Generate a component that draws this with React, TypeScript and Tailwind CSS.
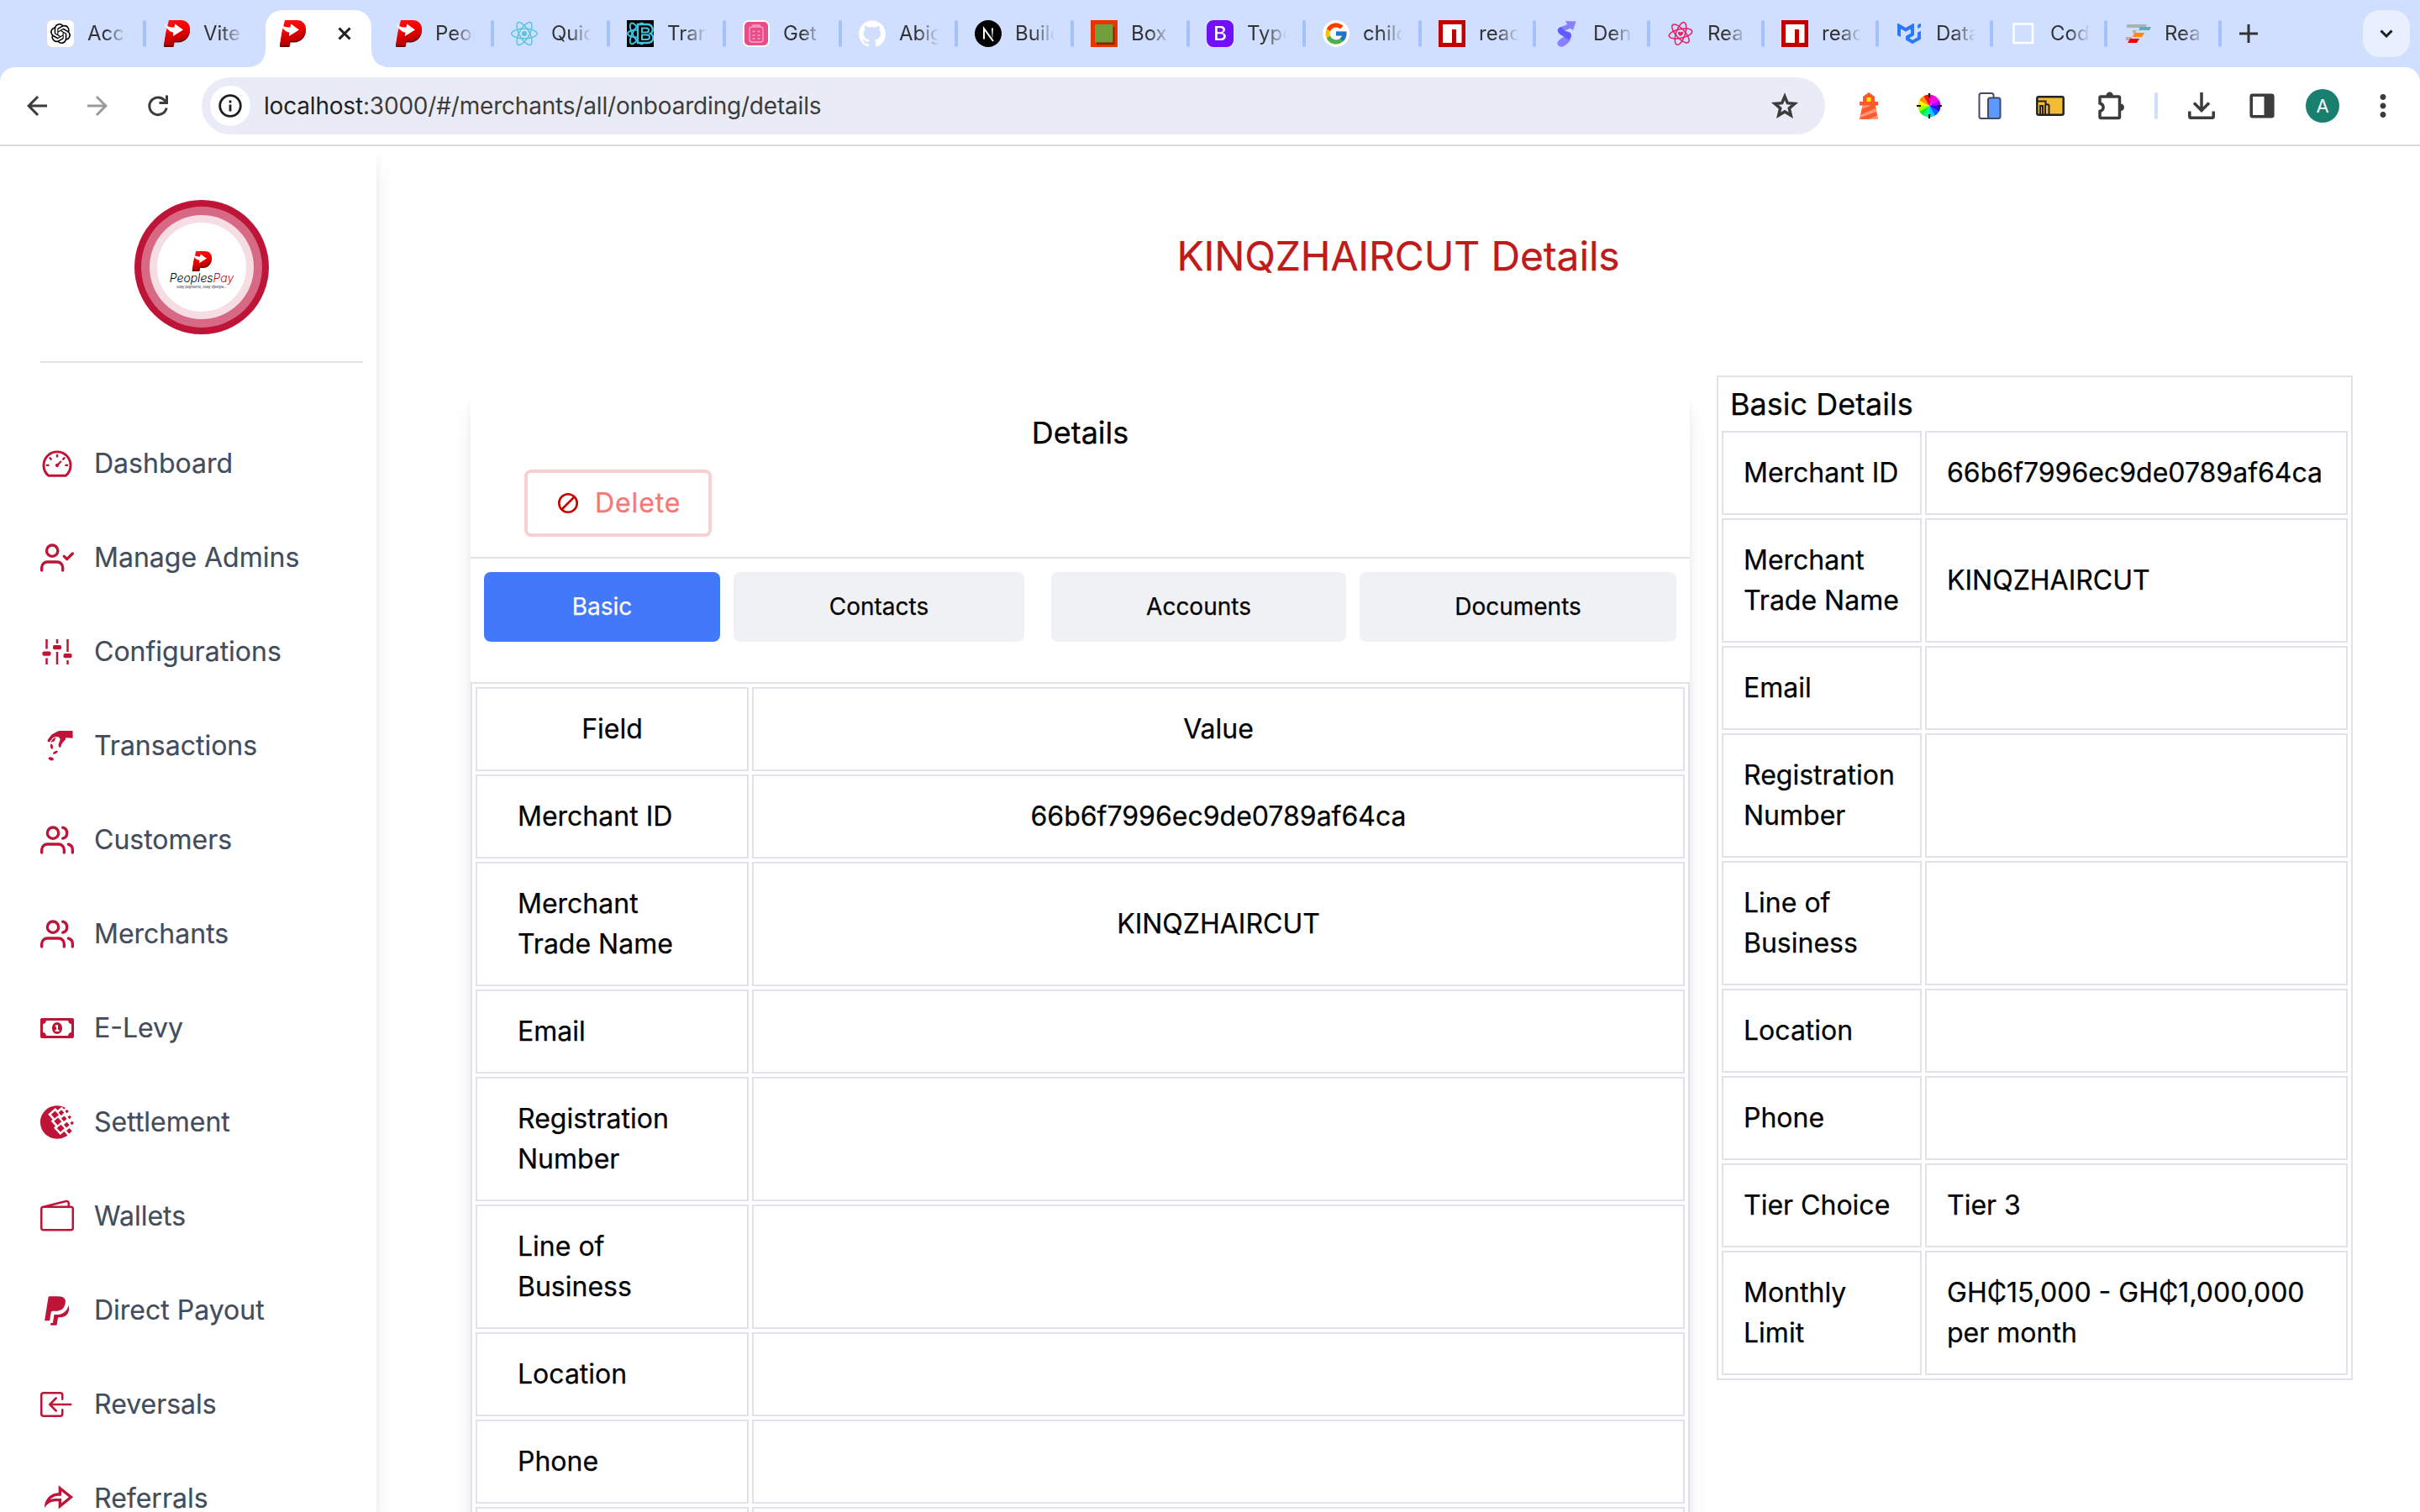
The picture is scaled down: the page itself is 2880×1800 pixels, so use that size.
import type { ReactNode } from "react";
import { FiUserCheck, FiUsers } from "react-icons/fi";
import { AiOutlineDashboard } from "react-icons/ai";
import { GiPayMoney } from "react-icons/gi";
import { FaRegMoneyBillAlt } from "react-icons/fa";
import { SiWebmoney, SiOpenai, SiReact, SiGithub, SiMui } from "react-icons/si";
import { BsWallet2, BsBoxArrowInLeft, BsBootstrapFill } from "react-icons/bs";
import { RiPaypalFill, RiShareForwardLine } from "react-icons/ri";
import { FcGoogle } from "react-icons/fc";
import { MdArrowBack, MdArrowForward, MdMoreVert } from "react-icons/md";

/* ---------- Logos and favicons ---------- */

function PayMark({ className }: { className?: string }) {
  return (
    <svg viewBox="0 0 32 32" className={className}>
      <defs>
        <linearGradient id="payRed" x1="0" y1="0" x2="0.3" y2="1">
          <stop offset="0" stopColor="#ff1414" />
          <stop offset="0.5" stopColor="#f30000" />
          <stop offset="1" stopColor="#a80000" />
        </linearGradient>
      </defs>
      <path d="M8 2h13c7 0 11 4.500 11 10.500C32 20 26 26.500 18.500 26.500H13.500L12.500 32H1L3.500 16z" fill="#5c0808" />
      <path d="M7 0h14c7 0 11 4.500 11 10.500C32 18.500 26 25 18.500 25H13.500L12.500 30.500H0.800L3.500 14z" fill="url(#payRed)" />
      <path d="M1.500 4c3 3.500 7 5 12 4.500l.8-4L24 11.500l-12 7.500.3-4.500C7.500 14 4 10 1.500 4z" fill="#fff" />
    </svg>
  );
}

function OpenAiFav() {
  return (
    <div className="flex size-8 items-center justify-center rounded-md bg-white">
      <SiOpenai className="size-6 text-black" />
    </div>
  );
}

function BootstrapReactFav() {
  return (
    <svg viewBox="0 0 32 32" className="size-8">
      <rect width="32" height="32" fill="#000" />
      <g fill="none" stroke="#41c4e0" strokeWidth="2">
        <ellipse cx="12" cy="16" rx="11" ry="4.500" />
        <ellipse cx="12" cy="16" rx="14" ry="5" transform="rotate(60 12 16)" />
        <ellipse cx="12" cy="16" rx="14" ry="5" transform="rotate(-60 12 16)" />
      </g>
      <path d="M13 5h11c8 0 8 9 4 11 5 2 5 11-4 11H13z" fill="#000" stroke="#41c4e0" strokeWidth="2.400" />
      <path d="M18 9.500h5c4 0 4 5 0 5h-5zM18 17.500h6c4 0 4 5.500 0 5.500h-6z" fill="none" stroke="#41c4e0" strokeWidth="2" />
    </svg>
  );
}

function ClipboardFav() {
  return (
    <svg viewBox="0 0 32 32" className="size-8">
      <rect width="32" height="32" rx="7" fill="#fff" />
      <rect x="2" y="2" width="28" height="28" rx="5" fill="#ea4c89" />
      <g fill="none" stroke="#f7a6c5" strokeWidth="1.400">
        <rect x="8" y="8" width="16" height="18" rx="3" />
        <path d="M12 8V6h8v2M11.500 13.500h3M17.500 13.500h3M11.500 18h3M17.500 18h3M11.500 22h3M17.500 22h3" />
      </g>
    </svg>
  );
}

function NextFav() {
  return (
    <svg viewBox="0 0 32 32" className="size-8">
      <defs>
        <linearGradient id="nextStroke" x1="0" y1="0" x2="0" y2="1">
          <stop offset="0" stopColor="#fff" />
          <stop offset="1" stopColor="#fff" stopOpacity="0.200" />
        </linearGradient>
      </defs>
      <circle cx="16" cy="16" r="16" fill="#000" />
      <path d="M11 22.500V10l11 15" fill="none" stroke="#fff" strokeWidth="2" />
      <rect x="20" y="9.500" width="2" height="12" fill="url(#nextStroke)" />
    </svg>
  );
}

function BoxFav() {
  return (
    <svg viewBox="0 0 32 32" className="size-8">
      <rect width="32" height="32" fill="#e53500" />
      <rect x="7" y="8" width="21.500" height="21" fill="#8a2000" />
      <rect x="5" y="5" width="21.500" height="21.500" fill="#6f9f3a" />
    </svg>
  );
}

function BootstrapFav() {
  return (
    <div className="size-8 rounded-md bg-white">
      <BsBootstrapFill className="size-8 text-[#7010f8]" />
    </div>
  );
}

function GoogleFav() {
  return (
    <div className="flex size-8 items-center justify-center rounded-full bg-white">
      <FcGoogle className="size-[30px]" />
    </div>
  );
}

function NpmFav() {
  return (
    <svg viewBox="0 0 32 32" className="size-8">
      <rect width="32" height="32" fill="#c00000" />
      <path d="M5 5h22.500v22H21V11h-5v16H5z" fill="#fff" />
    </svg>
  );
}

function RibbonFav() {
  return (
    <svg viewBox="0 0 32 32" className="size-8">
      <path d="M15 1l12.500.5L24 12l-3.500-2.500C17 12 13 12 12 16 8 17 5 13 6 11c1-3 7-3.500 11-6z" fill="#8880ff" />
      <path d="M6 10.500C5 15.500 9 17.500 12.500 19l4 6.500c5.500-2.500 7.500-8.500 3.500-11-2.500-1.500-7-1-8-4.500L9 8z" fill="#635bff" />
      <path d="M13 19.500c-2 2-8 5-7.500 8.500.6 3.500 4.500 4.500 7.500 3 4-2.500 7.500-5.500 8-9-2 2-5 1-8-2.500z" fill="#8880ff" />
    </svg>
  );
}

function HeartAtomFav() {
  return (
    <svg viewBox="0 0 32 32" className="size-8">
      <g fill="none" stroke="#e91e63" strokeWidth="1.500" transform="rotate(-12 16 16)">
        <ellipse cx="16" cy="16" rx="14" ry="5.400" />
        <ellipse cx="16" cy="16" rx="14" ry="5.400" transform="rotate(60 16 16)" />
        <ellipse cx="16" cy="16" rx="14" ry="5.400" transform="rotate(120 16 16)" />
      </g>
      <path d="M16 19c-4.500-3-3.300-5.300-1.700-5.300 1 0 1.700 1 1.700 1s.7-1 1.700-1c1.600 0 2.800 2.300-1.700 5.300z" fill="#e91e63" />
    </svg>
  );
}

function FrameFav() {
  return (
    <svg viewBox="0 0 32 32" className="size-8">
      <rect x="4.500" y="4.500" width="22.500" height="22.500" fill="none" stroke="#fff" strokeWidth="2.500" />
    </svg>
  );
}

function GanttFav() {
  return (
    <svg viewBox="0 0 32 32" className="size-8">
      <path d="M3 5h24l-2 4H3z" fill="#a8b2b4" />
      <path d="M19 8h13l-2 4H17z" fill="#4fb0c6" />
      <path d="M10 12h5l-2 3h-3z" fill="#a8b2b4" />
      <path d="M12 15h12l-3 5H10z" fill="#ff8a00" />
      <path d="M2 20h8l-2 4H2z" fill="#a8b2b4" />
      <path d="M7 22h11l-3 5H4z" fill="#fb0000" />
    </svg>
  );
}

/* ---------- Browser chrome ---------- */

type TabInfo = { title: string; icon: ReactNode; wide?: boolean; active?: boolean; divider?: boolean };

const tabs: TabInfo[] = [
  { title: "Acco", icon: <OpenAiFav />, wide: true, divider: true },
  { title: "Vite", icon: <PayMark className="size-8" />, wide: true },
  { title: "", icon: <PayMark className="size-8" />, wide: true, active: true },
  { title: "Peop", icon: <PayMark className="size-8" />, wide: true, divider: true },
  { title: "Quic", icon: <SiReact className="size-8 text-[#58c4dc]" />, wide: true, divider: true },
  { title: "Tran", icon: <BootstrapReactFav />, wide: true, divider: true },
  { title: "Get", icon: <ClipboardFav />, wide: true, divider: true },
  { title: "Abig", icon: <SiGithub className="size-8 text-white" />, wide: true, divider: true },
  { title: "Build", icon: <NextFav />, wide: true, divider: true },
  { title: "Box", icon: <BoxFav />, wide: true, divider: true },
  { title: "Typo", icon: <BootstrapFav />, wide: true, divider: true },
  { title: "child", icon: <GoogleFav />, wide: true, divider: true },
  { title: "reac", icon: <NpmFav />, divider: true },
  { title: "Den", icon: <RibbonFav />, divider: true },
  { title: "Rea", icon: <HeartAtomFav />, divider: true },
  { title: "reac", icon: <NpmFav />, divider: true },
  { title: "Data", icon: <SiMui className="size-7 text-[#2a78ff]" />, divider: true },
  { title: "Cod", icon: <FrameFav />, divider: true },
  { title: "Rea", icon: <GanttFav />, divider: true },
];

function ActiveTab({ icon }: { icon: ReactNode }) {
  return (
    <div className="flex w-[138px] shrink-0 items-end pl-1">
      <div className="relative flex h-[68px] w-[126px] items-center rounded-t-[20px] bg-white pb-3 pl-4">
        <svg viewBox="0 0 22 22" className="absolute bottom-0 -left-[22px] size-[22px]">
          <path d="M22 0v22H0C14 22 22 14 22 0z" fill="#fff" />
        </svg>
        <svg viewBox="0 0 22 22" className="absolute -right-[22px] bottom-0 size-[22px]">
          <path d="M0 0v22h22C8 22 0 14 0 0z" fill="#fff" />
        </svg>
        {icon}
        <svg viewBox="0 0 16 16" className="ml-[38px] size-4">
          <path d="M1.500 1.500l13 13M14.500 1.500l-13 13" stroke="#1f1f1f" strokeWidth="3" />
        </svg>
      </div>
    </div>
  );
}

function Tab({ tab }: { tab: TabInfo }) {
  return (
    <div className={`flex h-20 shrink-0 items-center pl-5 ${tab.wide ? "w-[138px]" : "w-[136px]"}`}>
      <div className="flex size-8 shrink-0 items-center justify-center">{tab.icon}</div>
      <div className="ml-4 w-[47px] overflow-hidden text-[24px] leading-8 whitespace-nowrap text-[#333] [mask-image:linear-gradient(to_right,black_45%,transparent)]">
        {tab.title}
      </div>
      {tab.divider && <div className="ml-auto h-8 w-1 rounded-full bg-[#a3c2fc]" />}
    </div>
  );
}

function TabStrip() {
  return (
    <div className="flex h-20 shrink-0 items-stretch bg-[#d0deff] pr-3 pl-9">
      {tabs.map((tab, i) => (tab.active ? <ActiveTab key={i} icon={tab.icon} /> : <Tab key={i} tab={tab} />))}
      <div className="flex w-16 items-center justify-center">
        <svg viewBox="0 0 22 22" className="size-[22px]">
          <path d="M11 0v22M0 11h22" stroke="#333" strokeWidth="3" />
        </svg>
      </div>
      <div className="mt-3 ml-auto flex h-14 w-14 items-center justify-center rounded-[20px] bg-[#e8effe]">
        <svg viewBox="0 0 16 10" className="h-[10px] w-4">
          <path d="M1.500 1.500L8 8l6.500-6.500" fill="none" stroke="#1f1f1f" strokeWidth="3" />
        </svg>
      </div>
    </div>
  );
}

function ToolSlot({ children }: { children: ReactNode }) {
  return <div className="flex w-[72px] shrink-0 items-center justify-center">{children}</div>;
}

function ReloadIcon() {
  return (
    <svg viewBox="0 0 26 26" className="size-[26px]">
      <path d="M22.500 9A10.300 10.300 0 1 0 23.200 15.500" fill="none" stroke="#3c3c3c" strokeWidth="3" />
      <path d="M25 0.500V11H14.500V8H22V0.500z" fill="#3c3c3c" />
    </svg>
  );
}

function StarIcon() {
  return (
    <svg viewBox="0 0 34 32" className="ml-auto h-8 w-[34px]">
      <path
        d="M17 4.800l3.300 7.900 8.500.7-6.500 5.600 2 8.300L17 22.900l-7.300 4.400 2-8.300-6.500-5.600 8.500-.7z"
        fill="none"
        stroke="#3c3c3c"
        strokeWidth="3.500"
      />
    </svg>
  );
}

function PuzzleIcon() {
  return (
    <svg viewBox="0 0 36 36" className="size-9">
      <path
        d="M5 8.500q0-1.500 1.500-1.500H27q1.500 0 1.500 1.500V31q0 1.500-1.500 1.500H6.500Q5 32.500 5 31v-6.500c5.500-1.500 5.500-8 0-9.500z"
        fill="none"
        stroke="#3c3c3c"
        strokeWidth="3.500"
      />
      <path d="M12.500 6c0-6 8.500-6 8.500 0zM29.500 15.500c6 0 6 8.500 0 8.500z" fill="#3c3c3c" />
    </svg>
  );
}

function LighthouseIcon() {
  return (
    <svg viewBox="0 0 24 32" className="h-8 w-6">
      <path d="M12 0l7 5v6h4v4.500h-3L23 32H1L4.500 15.500H1V11h4V5z" fill="#fb5a2c" />
      <rect x="9.500" y="6" width="5" height="5" fill="#ffe600" />
      <path d="M4.500 15.500H15L4 19.500zM2.500 26.500l18-7.500.8 4L2 30zM11.500 32l10.500-4.500.8 4.500z" fill="#ff9b7d" />
    </svg>
  );
}

const wheelColors = [
  "#ff00c8", "#ff00ff", "#a000ff", "#3000ff", "#0060ff", "#00d0ff",
  "#00ffa0", "#10f020", "#a0ff00", "#fff000", "#ff9000", "#ff1000",
];

function ColorWheelIcon() {
  const point = (deg: number) => {
    const a = ((deg - 90) * Math.PI) / 180;
    return `${(15 + 13.5 * Math.cos(a)).toFixed(2)} ${(15 + 13.5 * Math.sin(a)).toFixed(2)}`;
  };
  return (
    <svg viewBox="0 0 30 30" className="size-[30px]">
      {wheelColors.map((color, i) => (
        <path key={color} d={`M15 15L${point(i * 30)}A13.5 13.5 0 0 1 ${point(i * 30 + 31)}z`} fill={color} />
      ))}
      <path d="M15 0v5M15 25v5M0 15h5M25 15h5" stroke="#111" strokeWidth="2.200" />
    </svg>
  );
}

function DevicesIcon() {
  return (
    <svg viewBox="0 0 28 32" className="h-8 w-7">
      <rect x="1.500" y="1" width="17" height="30" rx="2.500" fill="#fff" stroke="#444a66" strokeWidth="2" />
      <rect x="12" y="6.500" width="14.500" height="24.500" rx="2.500" fill="#5b9bff" stroke="#444a66" strokeWidth="2" />
    </svg>
  );
}

function FolderIcon() {
  return (
    <svg viewBox="0 0 34 24" className="h-6 w-[34px]">
      <rect x="1.300" y="1.300" width="31.400" height="21.400" rx="2" fill="#f2bd35" stroke="#222" strokeWidth="2.500" />
      <path d="M2 6.500h9.500v4M5 23V12h3v11M11 23V12c0-2.500 4.500-2.500 4.500 0v11" fill="none" stroke="#222" strokeWidth="2" />
    </svg>
  );
}

function DownloadIcon() {
  return (
    <svg viewBox="0 0 32 32" className="size-8">
      <path d="M16 0v20M7 12.500l9 9 9-9M1.800 22.500V29q0 1.300 1.300 1.300h25.800q1.300 0 1.300-1.300v-6.500" fill="none" stroke="#3c3c3c" strokeWidth="3.500" />
    </svg>
  );
}

function SidePanelIcon() {
  return (
    <svg viewBox="0 0 30 30" className="size-[30px]">
      <rect x="2.200" y="2.200" width="25.600" height="25.600" rx="1.500" fill="none" stroke="#3c3c3c" strokeWidth="3.600" />
      <rect x="17.500" y="2" width="10.500" height="26" fill="#3c3c3c" />
    </svg>
  );
}

function Toolbar() {
  return (
    <div className="shrink-0 bg-[#d0deff]">
      <div className="flex h-[94px] items-center rounded-t-[18px] border-b-2 border-[#dcdcdc] bg-white px-2">
        <ToolSlot>
          <MdArrowBack className="size-9 text-[#3c3c3c]" />
        </ToolSlot>
        <ToolSlot>
          <MdArrowForward className="size-9 text-[#9c9c9c]" />
        </ToolSlot>
        <ToolSlot>
          <ReloadIcon />
        </ToolSlot>
        <div className="mx-4 flex h-[68px] flex-1 items-center rounded-full bg-[#e9ecf6] pr-[31px] pl-[10px]">
          <div className="flex size-12 items-center justify-center rounded-full bg-white">
            <svg viewBox="0 0 28 28" className="size-7">
              <circle cx="14" cy="14" r="12.300" fill="none" stroke="#1f1f1f" strokeWidth="2.800" />
              <path d="M14 12.500v8M14 7.500v3" stroke="#1f1f1f" strokeWidth="2.800" />
            </svg>
          </div>
          <div className="ml-4 text-[28px] tracking-[-0.19px] text-[#3c3c3c]">
            <span className="text-[#1f1f1f]">localhost</span>:3000/#/merchants/all/onboarding/details
          </div>
          <StarIcon />
        </div>
        <ToolSlot>
          <LighthouseIcon />
        </ToolSlot>
        <ToolSlot>
          <ColorWheelIcon />
        </ToolSlot>
        <ToolSlot>
          <DevicesIcon />
        </ToolSlot>
        <ToolSlot>
          <FolderIcon />
        </ToolSlot>
        <ToolSlot>
          <PuzzleIcon />
        </ToolSlot>
        <div className="flex w-9 justify-center">
          <div className="h-8 w-1 rounded-full bg-[#d0deff]" />
        </div>
        <ToolSlot>
          <DownloadIcon />
        </ToolSlot>
        <ToolSlot>
          <SidePanelIcon />
        </ToolSlot>
        <ToolSlot>
          <div className="flex size-10 items-center justify-center rounded-full bg-[#197f6e] text-[22px] leading-none text-white">
            A
          </div>
        </ToolSlot>
        <ToolSlot>
          <MdMoreVert className="size-[42px] text-[#3c3c3c]" />
        </ToolSlot>
      </div>
    </div>
  );
}

/* ---------- Sidebar ---------- */

function SlidersIcon() {
  return (
    <svg viewBox="0 0 16 16" fill="currentColor" className="size-10">
      <path d="M2.500 2h1v4.600h-1zM2.500 11h1v3h-1zM7.500 2h1v2h-1zM7.500 8h1v6h-1zM12.500 2h1v6h-1zM12.500 12h1v2h-1z" />
      <rect x="1" y="7.800" width="4" height="2.100" rx="0.700" />
      <rect x="6" y="4.800" width="4" height="2.100" rx="0.700" />
      <rect x="11" y="8.800" width="4" height="2.100" rx="0.700" />
    </svg>
  );
}

const navItems: { label: string; icon: ReactNode }[] = [
  { label: "Dashboard", icon: <AiOutlineDashboard className="size-10" /> },
  { label: "Manage Admins", icon: <FiUserCheck className="size-10" /> },
  { label: "Configurations", icon: <SlidersIcon /> },
  { label: "Transactions", icon: <GiPayMoney className="size-10" /> },
  { label: "Customers", icon: <FiUsers className="size-10" /> },
  { label: "Merchants", icon: <FiUsers className="size-10" /> },
  { label: "E-Levy", icon: <FaRegMoneyBillAlt className="size-10" /> },
  { label: "Settlement", icon: <SiWebmoney className="size-10" /> },
  { label: "Wallets", icon: <BsWallet2 className="size-10" /> },
  { label: "Direct Payout", icon: <RiPaypalFill className="size-10" /> },
  { label: "Reversals", icon: <BsBoxArrowInLeft className="size-10" /> },
  { label: "Referrals", icon: <RiShareForwardLine className="size-10" /> },
];

function Sidebar() {
  return (
    <aside className="flex w-[448px] shrink-0 flex-col bg-white shadow-[0_20px_30px_-6px_rgba(0,0,0,0.1),0_8px_12px_-4px_rgba(0,0,0,0.1)]">
      <div className="mt-16 flex justify-center pl-8">
        <div className="rounded-full bg-[#be1438] p-2">
          <div className="rounded-full bg-[#d76985] p-[10px]">
            <div className="rounded-full bg-[#f6dde4] p-[9px]">
              <div className="flex size-[106px] flex-col items-center rounded-full bg-white pt-[34px]">
                <PayMark className="size-6" />
                <div className="flex text-[14px] leading-[16px] font-light italic">
                  <span className="text-black">Peoples</span>
                  <span className="text-[#c8102e]">Pay</span>
                </div>
                <div className="text-[4px] leading-[6px] whitespace-nowrap text-[#222] italic">Easy payments, Easy lifestyle...</div>
              </div>
            </div>
          </div>
        </div>
      </div>
      <div className="mt-8 mr-4 ml-12 h-0.5 shrink-0 bg-[#e2e1ea]" />
      <nav className="mt-16 flex flex-col">
        {navItems.map((item) => (
          <div key={item.label} className="flex h-28 shrink-0 items-center pl-12">
            <div className="flex w-10 justify-center text-[#be1438]">{item.icon}</div>
            <div className="ml-6 text-[32px] text-[#434c5b] [-webkit-text-stroke:0.2px_currentcolor]">{item.label}</div>
          </div>
        ))}
      </nav>
    </aside>
  );
}

/* ---------- Detail tables ---------- */

const baseRows: { field: string; value: string; double?: boolean }[] = [
  { field: "Merchant ID", value: "66b6f7996ec9de0789af64ca" },
  { field: "Merchant Trade Name", value: "KINQZHAIRCUT", double: true },
  { field: "Email", value: "" },
  { field: "Registration Number", value: "", double: true },
  { field: "Line of Business", value: "", double: true },
  { field: "Location", value: "" },
  { field: "Phone", value: "" },
];

const summaryRows = [
  ...baseRows,
  { field: "Tier Choice", value: "Tier 3" },
  { field: "Monthly Limit", value: "GH₵15,000 - GH₵1,000,000 per month", double: true },
];

const detailRows = [...baseRows, { field: "Tier Choice", value: "Tier 3" }];

function DetailsCard() {
  return (
    <section className="w-[1451px] shrink-0 self-start rounded-2xl bg-white shadow-[0_20px_30px_-6px_rgba(0,0,0,0.1),0_8px_12px_-4px_rgba(0,0,0,0.1)]">
      <div className="pt-6 text-center text-[36px] leading-[56px]">Details</div>
      <div className="mt-4 flex h-[106px] border-b-2 border-[#e1e1e8] pl-16">
        <div className="flex h-20 w-[223px] items-center rounded-lg border-4 border-[#facfcf] pl-9">
          <svg viewBox="0 0 24 24" className="size-6">
            <circle cx="12" cy="12" r="10.700" fill="none" stroke="#c80000" strokeWidth="2.600" />
            <path d="M4.500 19.500l15-15" stroke="#c80000" strokeWidth="2.600" />
          </svg>
          <span className="ml-5 text-[32px] tracking-[0.9px] text-[#f87676]">Delete</span>
        </div>
      </div>
      <div className="flex gap-4 px-4 pt-4 text-[28px]">
        <div className="flex h-[83px] w-[281px] items-center justify-center rounded-lg bg-[#4278fa] pb-0.5 text-white">Basic</div>
        <div className="flex h-[83px] w-[346px] items-center justify-center rounded-lg bg-[#f0f1f5] pb-0.5">Contacts</div>
        <div className="ml-4 flex h-[83px] w-[351px] items-center justify-center rounded-lg bg-[#f0f1f5] pb-0.5">Accounts</div>
        <div className="flex h-[83px] flex-1 items-center justify-center rounded-lg bg-[#f0f1f5] pb-0.5">Documents</div>
      </div>
      <div className="mt-12 flex flex-col gap-1 border-2 border-[#e1e1e8] p-1 text-[32px] leading-[48px]">
        <div className="flex h-[100px] gap-1 text-center">
          <div className="w-[325px] border-2 border-[#e1e1e8] py-6">Field</div>
          <div className="flex-1 border-2 border-[#e1e1e8] py-6">Value</div>
        </div>
        {detailRows.map((row) => (
          <div key={row.field} className={`flex gap-1 ${row.double ? "h-[148px]" : "h-[100px]"}`}>
            <div className="flex w-[325px] items-center border-2 border-[#e1e1e8] pr-16 pl-12">{row.field}</div>
            <div className="flex flex-1 items-center justify-center border-2 border-[#e1e1e8]">{row.value}</div>
          </div>
        ))}
      </div>
    </section>
  );
}

function SummaryTable() {
  return (
    <section className="-mt-4 ml-8 flex w-[757px] shrink-0 flex-col gap-1 self-start border-2 border-[#e1e1e8] p-1 text-[32px] leading-[48px]">
      <div className="h-14 pl-[10px] text-[36px] leading-[56px]">Basic Details</div>
      {summaryRows.map((row) => (
        <div key={row.field} className={`flex gap-1 ${row.double ? "h-[148px]" : "h-[100px]"}`}>
          <div className="flex w-[238px] items-center border-2 border-[#e1e1e8] pr-4 pl-6">{row.field}</div>
          <div className="flex flex-1 items-center border-2 border-[#e1e1e8] px-6">{row.value}</div>
        </div>
      ))}
    </section>
  );
}

export default function App() {
  return (
    <div className="flex h-[1800px] w-[2880px] flex-col overflow-hidden bg-white font-['Inter',sans-serif] text-black">
      <TabStrip />
      <Toolbar />
      <div className="flex min-h-0 flex-1 overflow-hidden">
        <Sidebar />
        <main className="flex flex-1 flex-col [-webkit-text-stroke:0.25px_currentcolor]">
          <h1 className="mt-[95px] text-center text-[48px] leading-[72px] tracking-[-0.15px] text-[#bf1b1b]">KINQZHAIRCUT Details</h1>
          <div className="mt-[122px] flex pl-28">
            <DetailsCard />
            <SummaryTable />
          </div>
        </main>
      </div>
    </div>
  );
}
